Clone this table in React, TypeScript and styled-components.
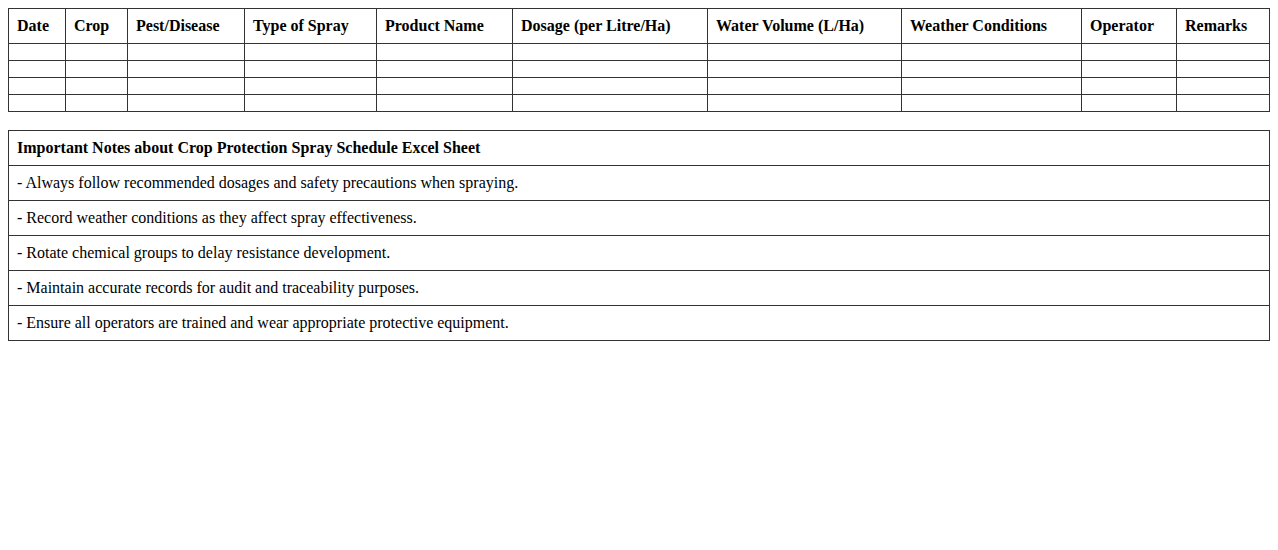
import React from "react";
import styled, { createGlobalStyle } from "styled-components";

const Global = createGlobalStyle`
  body {
    margin: 8px;
    font-family: "Liberation Serif", "Times New Roman", serif;
    font-size: 16px;
    color: #000;
    background: #fff;
  }
`;

const Page = styled.div`
  display: flex;
  flex-direction: column;
  gap: 18px;
`;

const Table = styled.table`
  width: 100%;
  border-collapse: collapse;
  table-layout: fixed;
`;

const Th = styled.th`
  border: 1px solid #333;
  padding: 8px;
  text-align: left;
  font-weight: bold;
`;

const Td = styled.td<{ $bold?: boolean }>`
  border: 1px solid #333;
  padding: 8px;
  text-align: left;
  font-weight: ${(p) => (p.$bold ? "bold" : "normal")};
`;

const columns = [
  { label: "Date", w: 57 },
  { label: "Crop", w: 62 },
  { label: "Pest/Disease", w: 117 },
  { label: "Type of Spray", w: 132 },
  { label: "Product Name", w: 136 },
  { label: "Dosage (per Litre/Ha)", w: 195 },
  { label: "Water Volume (L/Ha)", w: 194 },
  { label: "Weather Conditions", w: 180 },
  { label: "Operator", w: 95 },
  { label: "Remarks", w: 93 },
];

const notes = [
  "- Always follow recommended dosages and safety precautions when spraying.",
  "- Record weather conditions as they affect spray effectiveness.",
  "- Rotate chemical groups to delay resistance development.",
  "- Maintain accurate records for audit and traceability purposes.",
  "- Ensure all operators are trained and wear appropriate protective equipment.",
];

export default function App() {
  return (
    <>
      <Global />
      <Page>
        <Table>
          <colgroup>
            {columns.map((c) => (
              <col key={c.label} style={{ width: c.w }} />
            ))}
          </colgroup>
          <thead>
            <tr>
              {columns.map((c) => (
                <Th key={c.label}>{c.label}</Th>
              ))}
            </tr>
          </thead>
          <tbody>
            {[0, 1, 2, 3].map((r) => (
              <tr key={r}>
                {columns.map((c) => (
                  <Td key={c.label}></Td>
                ))}
              </tr>
            ))}
          </tbody>
        </Table>
        <Table>
          <tbody>
            <tr>
              <Td $bold>Important Notes about Crop Protection Spray Schedule Excel Sheet</Td>
            </tr>
            {notes.map((n) => (
              <tr key={n}>
                <Td>{n}</Td>
              </tr>
            ))}
          </tbody>
        </Table>
      </Page>
    </>
  );
}
